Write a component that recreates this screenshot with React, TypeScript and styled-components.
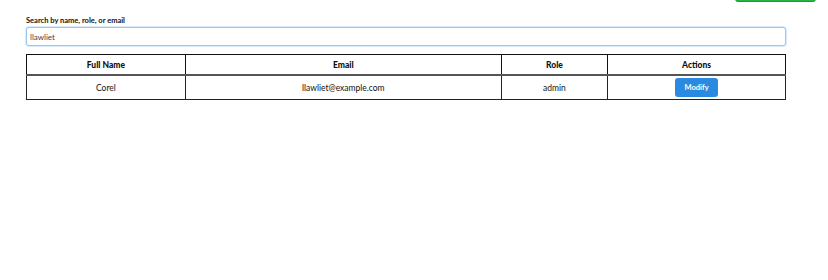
import { useState } from 'react';
import styled, { createGlobalStyle } from 'styled-components';

const GlobalStyle = createGlobalStyle`
  html, body {
    margin: 0;
    padding: 0;
    background: #ffffff;
    font-family: Lato, "Noto Sans", sans-serif;
    color: #111;
  }
`;

const Page = styled.div`
  position: relative;
  width: 828px;
  height: 280px;
  overflow: hidden;
`;

const TopButton = styled.button`
  position: absolute;
  top: -20px;
  left: 735px;
  width: 81px;
  height: 22px;
  border: 1px solid #1c9a3a;
  border-radius: 3px;
  background: #28b446;
`;

const Content = styled.div`
  width: 760px;
  padding: 16px 0 0 26px;
`;

const Label = styled.label`
  display: block;
  font-size: 7.5px;
  font-weight: 700;
  line-height: 10px;
  margin-bottom: 1px;
`;

const SearchInput = styled.input`
  display: block;
  box-sizing: border-box;
  width: 100%;
  height: 19px;
  padding: 0 3px;
  border: 1px solid #9cc8f2;
  border-radius: 3px;
  outline: none;
  font-family: inherit;
  font-size: 8px;
  color: #444;
  box-shadow: 0 0 0 1px #d8eaf9;
`;

const Table = styled.table`
  width: 100%;
  margin-top: 8px;
  border-collapse: collapse;
  border: 1px solid #111;
  font-size: 8.5px;
`;

const Th = styled.th<{ $width: number }>`
  width: ${p => p.$width}px;
  height: 19px;
  padding: 0;
  border: 1px solid #111;
  font-weight: 900;
  text-align: center;
`;

const Td = styled.td`
  height: 23px;
  padding: 0;
  border: 1px solid #222;
  border-top: 2px solid #555;
  text-align: center;
  font-size: 8.5px;
`;

const ModifyButton = styled.button`
  width: 43px;
  height: 19px;
  border: none;
  border-radius: 3px;
  background: #2a8ae2;
  color: #fff;
  font-family: inherit;
  font-size: 7.5px;
  font-weight: 700;
  cursor: pointer;
`;

const users = [{ name: 'Corel', email: 'llawliet@example.com', role: 'admin' }];

export default function App() {
  const [query, setQuery] = useState('llawliet');

  return (
    <Page>
      <GlobalStyle />
      <TopButton />
      <Content>
        <Label htmlFor="search">Search by name, role, or email</Label>
        <SearchInput id="search" value={query} onChange={e => setQuery(e.target.value)} autoFocus />
        <Table>
          <thead>
            <tr>
              <Th $width={159}>Full Name</Th>
              <Th $width={317}>Email</Th>
              <Th $width={106}>Role</Th>
              <Th $width={178}>Actions</Th>
            </tr>
          </thead>
          <tbody>
            {users.map(u => (
              <tr key={u.email}>
                <Td>{u.name}</Td>
                <Td>{u.email}</Td>
                <Td>{u.role}</Td>
                <Td>
                  <ModifyButton>Modify</ModifyButton>
                </Td>
              </tr>
            ))}
          </tbody>
        </Table>
      </Content>
    </Page>
  );
}
